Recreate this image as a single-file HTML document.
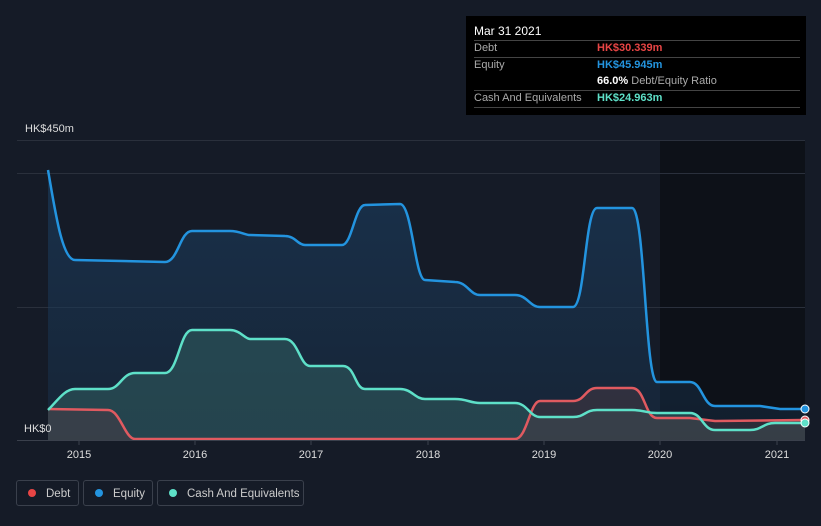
<!DOCTYPE html><html><head><style>
body{margin:0;width:821px;height:526px;background:#151b27;font-family:"Liberation Sans",sans-serif;overflow:hidden;position:relative}
.tt{position:absolute;left:466px;top:16px;width:340px;height:99px;background:#000;color:#fff;font-size:11px}
.r{position:absolute;left:8px;width:326px;border-top:1px solid #444}
.l{position:absolute;left:8px;color:#aaa}
.v{position:absolute;left:131px;font-weight:bold}
.lg{position:absolute;top:480px;height:26px;border:1px solid #3a404c;border-radius:3px;color:#ccc;font-size:11.5px;line-height:26px;box-sizing:border-box;white-space:nowrap}
.lg i{display:inline-block;width:8px;height:8px;border-radius:50%;margin:0 10px 0 11px}
</style></head><body>
<svg width="821" height="526" style="position:absolute;left:0;top:0">
<defs><linearGradient id="g" x1="0" y1="0" x2="0" y2="1"><stop offset="0" stop-color="#1a3a5a" stop-opacity=".7"/><stop offset="1" stop-color="#1a3a5a" stop-opacity=".3"/></linearGradient></defs>
<rect x="660" y="140" width="145" height="300" fill="#0d1118"/>
<g stroke="#2a303c" stroke-width="1"><line x1="17" y1="140.5" x2="805" y2="140.5"/><line x1="17" y1="173.5" x2="805" y2="173.5"/><line x1="17" y1="307.5" x2="805" y2="307.5"/></g>
<path d="M48,170 C55,210 62,260 75,260 L165,262 C178,262 180,231 192,231 L230,231 C240,231 245,235 250,235 L285,236 C295,236 298,245 305,245 L342,245 C352,245 355,205 365,205 L400,204 C412,204 415,280 425,280 L455,282 C467,282 470,295 480,295 L515,295 C527,295 530,307 540,307 L573,307 C585,307 585,208 597,208 L632,208 C645,208 645,382 657,382 L690,382 C702,382 703,406 715,406 L760,406 L780,409 L805,409 L805,440 L48,440Z" fill="url(#g)"/>
<path d="M48,410 C58,400 65,389 75,389 L108,389 C120,389 122,373 135,373 L165,373 C178,373 180,330 192,330 L230,330 C240,330 245,339 250,339 L285,339 C298,339 300,366 310,366 L343,366 C355,366 355,389 365,389 L400,389 C412,389 415,399 425,399 L455,399 C467,399 470,403 480,403 L515,403 C527,403 530,417 540,417 L573,417 C585,417 585,410 597,410 L632,410 C645,410 645,413 657,413 L690,413 C702,413 703,430 715,430 L750,430 C762,430 763,423 775,423 L805,423 L805,440 L48,440Z" fill="#2e5a5e" fill-opacity=".6"/>
<path d="M48,409 L108,410 C120,410 125,439 135,439 L515,439 C527,439 530,401 540,401 L573,401 C585,401 585,388 597,388 L632,388 C645,388 645,418 657,418 L690,418 L715,421 L805,420 L805,440 L48,440Z" fill="#4a3a44" fill-opacity=".5"/>
<g fill="none" stroke-width="2.5">
<path d="M48,170 C55,210 62,260 75,260 L165,262 C178,262 180,231 192,231 L230,231 C240,231 245,235 250,235 L285,236 C295,236 298,245 305,245 L342,245 C352,245 355,205 365,205 L400,204 C412,204 415,280 425,280 L455,282 C467,282 470,295 480,295 L515,295 C527,295 530,307 540,307 L573,307 C585,307 585,208 597,208 L632,208 C645,208 645,382 657,382 L690,382 C702,382 703,406 715,406 L760,406 L780,409 L805,409" stroke="#2394df"/>
<path d="M48,409 L108,410 C120,410 125,439 135,439 L515,439 C527,439 530,401 540,401 L573,401 C585,401 585,388 597,388 L632,388 C645,388 645,418 657,418 L690,418 L715,421 L805,420" stroke="#e05a60"/>
<path d="M48,410 C58,400 65,389 75,389 L108,389 C120,389 122,373 135,373 L165,373 C178,373 180,330 192,330 L230,330 C240,330 245,339 250,339 L285,339 C298,339 300,366 310,366 L343,366 C355,366 355,389 365,389 L400,389 C412,389 415,399 425,399 L455,399 C467,399 470,403 480,403 L515,403 C527,403 530,417 540,417 L573,417 C585,417 585,410 597,410 L632,410 C645,410 645,413 657,413 L690,413 C702,413 703,430 715,430 L750,430 C762,430 763,423 775,423 L805,423" stroke="#5ee0c8"/>
</g>
<circle cx="805" cy="409" r="4" fill="#2394df" stroke="#fff"/><circle cx="805" cy="420" r="4" fill="#e05a60" stroke="#fff"/><circle cx="805" cy="423" r="4" fill="#5ee0c8" stroke="#fff"/>
<line x1="17" y1="440.5" x2="805" y2="440.5" stroke="#3a404c"/>
<g stroke="#3a404c"><line x1="79" y1="440" x2="79" y2="445"/><line x1="195" y1="440" x2="195" y2="445"/><line x1="311" y1="440" x2="311" y2="445"/><line x1="428" y1="440" x2="428" y2="445"/><line x1="544" y1="440" x2="544" y2="445"/><line x1="660" y1="440" x2="660" y2="445"/><line x1="777" y1="440" x2="777" y2="445"/></g>
<g fill="#ddd" font-size="11" text-anchor="middle" font-family="Liberation Sans"><text x="79" y="458">2015</text><text x="195" y="458">2016</text><text x="311" y="458">2017</text><text x="428" y="458">2018</text><text x="544" y="458">2019</text><text x="660" y="458">2020</text><text x="777" y="458">2021</text></g>
<text x="25" y="132" fill="#ddd" font-size="11" font-family="Liberation Sans">HK$450m</text>
<text x="24" y="432" fill="#ddd" font-size="11" font-family="Liberation Sans">HK$0</text>
</svg>
<div class="tt">
<div style="position:absolute;left:8px;top:8px;font-size:12px">Mar 31 2021</div>
<div class="r" style="top:24px"></div>
<div class="l" style="top:26px">Debt</div><div class="v" style="top:26px;color:#e84545">HK$30.339m</div>
<div class="r" style="top:41px"></div>
<div class="l" style="top:43px">Equity</div><div class="v" style="top:43px;color:#2394df">HK$45.945m</div>
<div class="v" style="top:59px">66.0% <span style="color:#aaa;font-weight:normal">Debt/Equity Ratio</span></div>
<div class="r" style="top:74px"></div>
<div class="l" style="top:76px">Cash And Equivalents</div><div class="v" style="top:76px;color:#5ee0c8">HK$24.963m</div>
<div class="r" style="top:91px"></div>
</div>
<div class="lg" style="left:16px;width:63px"><i style="background:#e84545"></i>Debt</div>
<div class="lg" style="left:83px;width:70px"><i style="background:#2394df"></i>Equity</div>
<div class="lg" style="left:157px;width:147px"><i style="background:#5ee0c8"></i>Cash And Equivalents</div>
</body></html>
